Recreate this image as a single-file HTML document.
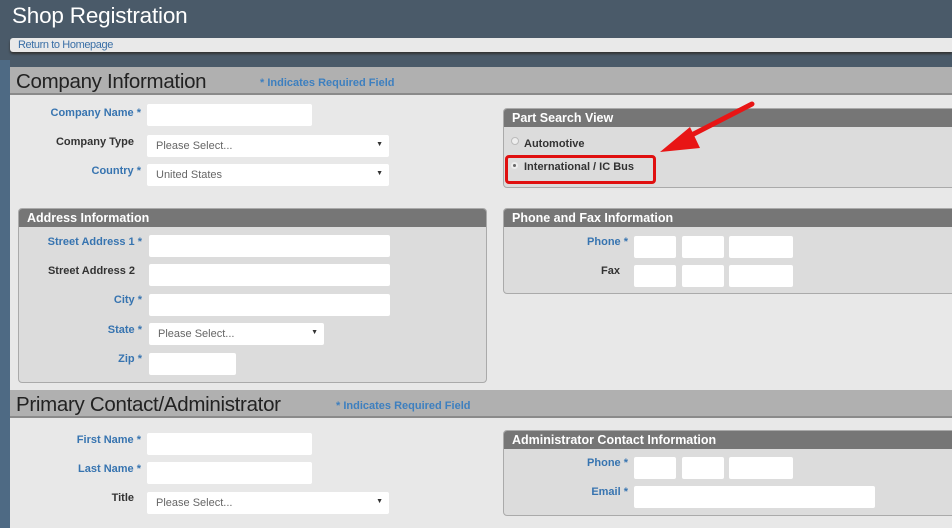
<!DOCTYPE html>
<html><head><style>
*{margin:0;padding:0;box-sizing:border-box}
body{width:952px;height:528px;overflow:hidden;background:#4a5a69;font-family:"Liberation Sans",sans-serif;position:relative}
div,span{position:absolute}
.t{color:#fff;font-size:22.5px;left:12px;top:3px;letter-spacing:-0.2px}
.nav{left:10px;top:38px;width:942px;height:14px;background:#e9e9e9;border-radius:3px 0 0 3px;font-size:11px;color:#3a6fa6;padding:1px 0 0 8px;letter-spacing:-0.4px;box-shadow:0 2px 2px #333}
.panel{left:10px;top:67px;width:942px;height:461px;background:#e8e8e8}
.band{left:10px;width:942px;height:28px;background:#b0b0b0;border-bottom:2px solid #8a8a8a}
.band b{position:absolute;left:6px;top:3px;font-weight:normal;font-size:20.5px;color:#222;letter-spacing:-0.3px}
.band i{position:absolute;font-style:normal;font-size:11px;font-weight:bold;color:#3d7fbf;top:10px}
.lbl{font-size:11px;font-weight:bold;color:#333;text-align:right;width:130px}
.blue{color:#3774b0}
.in{background:#fff;border-radius:2px;height:22px}
.sel{background:#fff;border-radius:2px;height:22px;font-size:11px;color:#666;padding:5px 0 0 9px}
.sel:after{content:"▼";position:absolute;right:6px;top:6px;font-size:7px;color:#333}
.box{background:#dcdcdc;border:1px solid #aaa;border-radius:4px;overflow:hidden}
.box .h{left:0;top:0;right:0;height:18px;background:#767676;color:#fff;font-weight:bold;font-size:12.5px;padding:2px 0 0 8px}
</style></head><body>
<div style="left:0;top:60px;width:10px;height:468px;background:#4e6a84"></div>
<div class="t">Shop Registration</div>
<div class="nav">Return to Homepage</div>
<div class="panel"></div>
<div class="band" style="top:67px"><b>Company Information</b><i style="left:250px">* Indicates Required Field</i></div>

<div class="lbl blue" style="left:11px;top:107px">Company Name *</div>
<div class="in" style="left:147px;top:104px;width:165px"></div>
<div class="lbl" style="left:4px;top:136px">Company Type</div>
<div class="sel" style="left:147px;top:135px;width:242px">Please Select...</div>
<div class="lbl blue" style="left:11px;top:165px">Country *</div>
<div class="sel" style="left:147px;top:164px;width:242px">United States</div>

<div class="box" style="left:503px;top:108px;width:460px;height:80px"><div class="h">Part Search View</div></div>
<div style="left:511px;top:137px;width:8px;height:8px;border-radius:50%;background:#eee;border:1px solid #bbb"></div>
<div style="left:524px;top:138px;font-size:11px;font-weight:bold;color:#333">Automotive</div>
<div style="left:511px;top:162px;width:7px;height:7px;border-radius:50%;background:#666;border:2px solid #eee"></div>
<div style="left:524px;top:161px;font-size:11px;font-weight:bold;color:#333">International / IC Bus</div>
<div style="left:505px;top:155px;width:151px;height:29px;border:3px solid #e01010;border-radius:4px"></div>
<svg style="position:absolute;left:0;top:0" width="952" height="528"><line x1="752" y1="104" x2="680" y2="141" stroke="#e81515" stroke-width="5" stroke-linecap="round"/><polygon points="660,152 690,127 700,148" fill="#e81515"/></svg>

<div class="box" style="left:18px;top:208px;width:469px;height:175px"><div class="h">Address Information</div></div>
<div class="lbl blue" style="left:12px;top:236px">Street Address 1 *</div>
<div class="in" style="left:149px;top:235px;width:241px"></div>
<div class="lbl" style="left:5px;top:265px">Street Address 2</div>
<div class="in" style="left:149px;top:264px;width:241px"></div>
<div class="lbl blue" style="left:12px;top:294px">City *</div>
<div class="in" style="left:149px;top:294px;width:241px"></div>
<div class="lbl blue" style="left:12px;top:324px">State *</div>
<div class="sel" style="left:149px;top:323px;width:175px">Please Select...</div>
<div class="lbl blue" style="left:12px;top:353px">Zip *</div>
<div class="in" style="left:149px;top:353px;width:87px"></div>

<div class="box" style="left:503px;top:208px;width:460px;height:86px"><div class="h">Phone and Fax Information</div></div>
<div class="lbl blue" style="left:498px;top:236px">Phone *</div>
<div class="in" style="left:634px;top:236px;width:42px"></div>
<div class="in" style="left:682px;top:236px;width:42px"></div>
<div class="in" style="left:729px;top:236px;width:64px"></div>
<div class="lbl" style="left:490px;top:265px">Fax</div>
<div class="in" style="left:634px;top:265px;width:42px"></div>
<div class="in" style="left:682px;top:265px;width:42px"></div>
<div class="in" style="left:729px;top:265px;width:64px"></div>

<div class="band" style="top:390px"><b>Primary Contact/Administrator</b><i style="left:326px">* Indicates Required Field</i></div>
<div class="lbl blue" style="left:11px;top:434px">First Name *</div>
<div class="in" style="left:147px;top:433px;width:165px"></div>
<div class="lbl blue" style="left:11px;top:463px">Last Name *</div>
<div class="in" style="left:147px;top:462px;width:165px"></div>
<div class="lbl" style="left:4px;top:492px">Title</div>
<div class="sel" style="left:147px;top:492px;width:242px">Please Select...</div>

<div class="box" style="left:503px;top:430px;width:460px;height:86px"><div class="h">Administrator Contact Information</div></div>
<div class="lbl blue" style="left:498px;top:457px">Phone *</div>
<div class="in" style="left:634px;top:457px;width:42px"></div>
<div class="in" style="left:682px;top:457px;width:42px"></div>
<div class="in" style="left:729px;top:457px;width:64px"></div>
<div class="lbl blue" style="left:498px;top:486px">Email *</div>
<div class="in" style="left:634px;top:486px;width:241px"></div>
</body></html>
